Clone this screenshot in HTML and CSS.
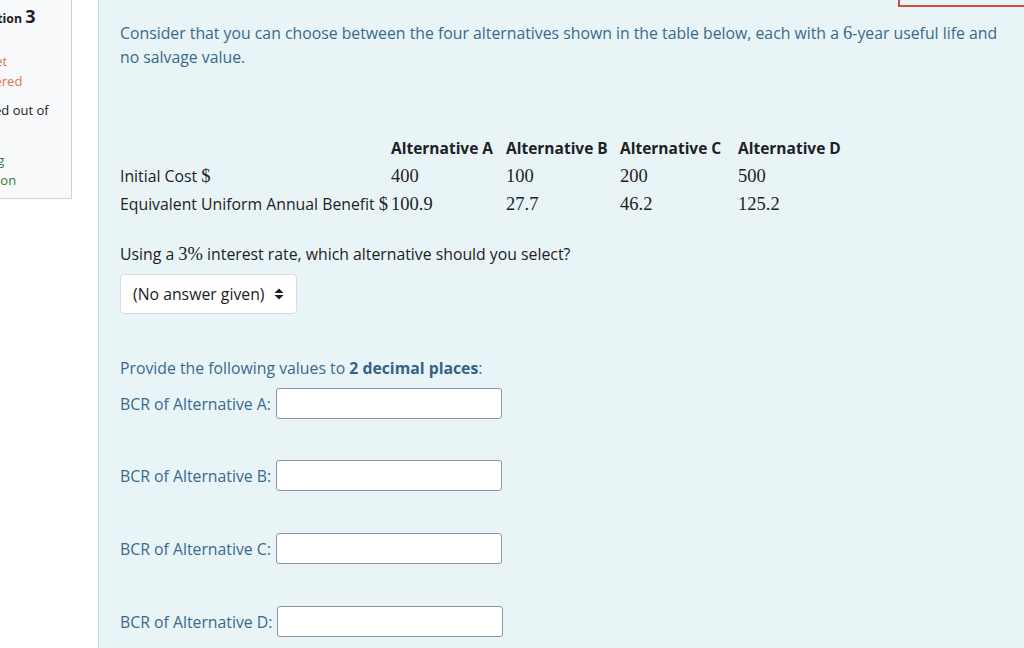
FILE: index.html
```html
<!DOCTYPE html>
<html>
<head>
<meta charset="utf-8">
<link rel="stylesheet" href="styles.css">
</head>
<body>
<div class="que">
  <div class="info">
    <h3 class="qno">Question <span class="num">3</span></h3>
    <div class="state">Not yet answered</div>
    <div class="grade">Marked out of<br>1.00</div>
    <div class="flag"><span class="flagicon"></span>Flag<br>question</div>
  </div>
  <div class="formulation">
    <div class="warnbox"></div>
    <p class="qtext">Consider that you can choose between the four alternatives shown in the table below, each with a <span class="m">6</span>-year useful life and no salvage value.</p>
    <table class="alts">
      <tr class="head"><th></th><th>Alternative A</th><th>Alternative B</th><th>Alternative C</th><th>Alternative D</th></tr>
      <tr><td class="lbl">Initial Cost <span class="m">$</span></td><td class="m">400</td><td class="m">100</td><td class="m">200</td><td class="m">500</td></tr>
      <tr><td class="lbl">Equivalent Uniform Annual Benefit <span class="m">$</span></td><td class="m">100.9</td><td class="m">27.7</td><td class="m">46.2</td><td class="m">125.2</td></tr>
    </table>
    <p class="dark">Using a <span class="m">3%</span> interest rate, which alternative should you select?</p>
    <div class="select">(No answer given)
      <svg class="arrows" width="10" height="12" viewBox="0 0 10 12"><path d="M5 0.5 L9.5 5 L0.5 5 Z M5 11.5 L9.5 7 L0.5 7 Z" fill="#1d2125"/></svg>
    </div>
    <p class="provide">Provide the following values to <b>2 decimal places</b>:</p>
    <div class="row ra"><span>BCR of Alternative A:</span><span class="inp"></span></div>
    <div class="row rb"><span>BCR of Alternative B:</span><span class="inp"></span></div>
    <div class="row rc"><span>BCR of Alternative C:</span><span class="inp"></span></div>
    <div class="row rd"><span>BCR of Alternative D:</span><span class="inp"></span></div>
  </div>
</div>
</body>
</html>
```
FILE: styles.css
```css
html, body {
  margin: 0;
  padding: 0;
  background: #ffffff;
  overflow: hidden;
}
body {
  font-family: "Open Sans", "Noto Sans", sans-serif;
  font-size: 15.8px;
  color: #1d2125;
}
.que {
  display: flex;
  align-items: flex-start;
  gap: 26px;
  height: 648px;
}
.info {
  flex: 0 0 auto;
  width: 102px;
  margin-left: -46px;
  padding: 4px 6px 8px 8px;
  background: #f8f9fa;
  border: 1px solid #cfd3d7;
  border-top: none;
  line-height: 20px;
  font-size: 13px;
}
.qno {
  margin: 0 0 20px 3px;
  font-size: 12.3px;
  font-weight: 700;
  line-height: 24px;
  color: #1d2125;
}
.qno .num {
  font-size: 18px;
}
.state {
  color: #e0714f;
  width: 66px;
  margin-bottom: 9px;
}
.grade {
  margin-bottom: 10px;
}
.flag {
  color: #357a32;
}
.flagicon {
  display: inline-block;
  width: 17px;
}
.formulation {
  flex: 1 1 auto;
  position: relative;
  height: 648px;
  background: #e9f4f7;
  border-left: 1px solid #b9e0e6;
  padding: 21px 20px 0 21px;
  color: #386a8c;
}
.warnbox {
  position: absolute;
  left: 799px;
  top: -10px;
  width: 200px;
  height: 13px;
  border: 2px solid #d24a46;
}
p { margin: 0; }
.qtext {
  line-height: 24px;
  width: 885px;
}
.m {
  font-family: "Liberation Serif", "DejaVu Serif", serif;
  font-size: 18.5px;
}
.alts {
  margin-top: 65px;
  border-collapse: collapse;
  color: #1d2125;
}
.alts th {
  text-align: left;
  font-weight: 700;
  font-size: 15.5px;
  padding: 0;
  height: 28px;
  vertical-align: middle;
}
.alts td {
  padding: 0;
  height: 28px;
  vertical-align: middle;
}
.alts td.lbl { width: 271px; }
.alts th:nth-child(2), .alts td:nth-child(2) { width: 115px; }
.alts th:nth-child(3), .alts td:nth-child(3) { width: 114px; }
.alts th:nth-child(4), .alts td:nth-child(4) { width: 118px; }
.alts .lbl { font-family: "Open Sans", "Noto Sans", sans-serif; font-size: 15.8px; }
.alts .lbl .m { font-size: 18.5px; }
.dark {
  color: #1d2125;
  margin-top: 24px;
  line-height: 24px;
}
.select {
  margin-top: 8px;
  width: 151px;
  height: 38px;
  display: flex;
  align-items: center;
  justify-content: space-between;
  padding: 0 12px 0 12px;
  background: #ffffff;
  border: 1px solid #d7dbde;
  border-radius: 4px;
  color: #1d2125;
  box-sizing: content-box;
}
.provide {
  margin-top: 42px;
  line-height: 24px;
}
.provide b { font-weight: 700; color: #33628a; }
.row {
  display: flex;
  align-items: center;
  gap: 5px;
  line-height: 24px;
}
.row .inp {
  display: inline-block;
  width: 224px;
  height: 29px;
  background: #fff;
  border: 1px solid #8f959e;
  border-radius: 3px;
}
.ra { margin-top: 8px; }
.rb { margin-top: 41px; }
.rc { margin-top: 42px; }
.rd { margin-top: 42px; }
```
